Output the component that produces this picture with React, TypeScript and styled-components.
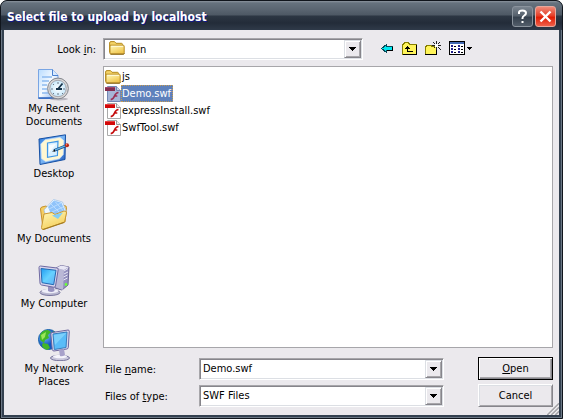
import React, { useState } from "react";
import styled, { createGlobalStyle, css } from "styled-components";

const face = "#ebe9ed";
const shadow = "#86858b";
const softEdge = "#a7a6aa";
const lightEdge = "#dcdfe4";

const GlobalStyle = createGlobalStyle`
  * { box-sizing: border-box; }
  body { margin: 0; background: #fff; color: #000; }
  body, button, input, select {
    font-family: "DejaVu Sans Condensed", "Liberation Sans", sans-serif;
    font-size: 11px;
    line-height: 13px;
  }
`;

const Frame = styled.div`
  display: flex;
  flex-direction: column;
  min-height: 100vh;
  padding: 0 3px 3px;
  border: 1px solid #10151c;
  border-radius: 7px 7px 0 0;
  background: #344150;
  box-shadow: inset 1px 0 #6b7785, inset -1px -1px #6b7785;
  overflow: hidden;
`;

const TitleBar = styled.header`
  display: flex;
  align-items: center;
  gap: 2px;
  height: 29px;
  margin: 0 -3px;
  padding: 2px 6px 0 6px;
  border-radius: 6px 6px 0 0;
  background: linear-gradient(#8b949e 0, #66727e 2px, #5b6672 8px, #4d5864 14px, #2c3643 15px, #232c39 22px, #2f3a49 29px);
`;

const Title = styled.h1`
  flex: 1;
  margin: 0;
  color: #fff;
  font-size: 12px;
  line-height: 16px;
  font-weight: bold;
  white-space: nowrap;
  text-shadow: 1px 1px #10188c;
`;

const CaptionButton = styled.button<{ $danger?: boolean }>`
  display: grid;
  place-items: center;
  width: 21px;
  height: 21px;
  padding: 0;
  border: 1px solid ${(p) => (p.$danger ? "#e8a79c" : "#8a939d")};
  border-radius: 3px;
  background: ${(p) =>
    p.$danger
      ? "linear-gradient(#ef8a78, #e5402a 45%, #e01d04 55%, #f0604a)"
      : "linear-gradient(#7a848f, #56616d 45%, #36414e 55%, #525d6a)"};
`;

const Body = styled.main`
  flex: 1;
  display: grid;
  grid-template-columns: 84px minmax(0, 1fr);
  grid-template-rows: auto 1fr;
  column-gap: 7px;
  row-gap: 6px;
  padding: 8px 6px 8px 8px;
  background: ${face};
`;

const LookLabel = styled.label`
  align-self: center;
  justify-self: end;
`;

const TopRow = styled.div`
  display: flex;
  align-items: center;
  gap: 17px;
`;

const Combo = styled.div`
  position: relative;
  display: flex;
  flex: 1;
  min-width: 0;
  height: 22px;
  padding: 1px;
  border: 1px solid;
  border-color: ${softEdge} #fff #fff ${softEdge};
  box-shadow: inset 1px 1px ${shadow}, inset -1px -1px ${lightEdge};
  background: #fff;
`;

const fieldStyle = css<{ $icon?: boolean }>`
  flex: 1;
  min-width: 0;
  padding: 0 20px 0 ${(p) => (p.$icon ? "26px" : "2px")};
  border: 0;
  outline: 0;
  appearance: none;
  background: transparent;
  color: #000;
`;

const Select = styled.select<{ $icon?: boolean }>`${fieldStyle}`;
const TextInput = styled.input<{ $icon?: boolean }>`${fieldStyle}`;

const ComboIcon = styled.span`
  position: absolute;
  left: 5px;
  top: 1px;
  height: 16px;
  pointer-events: none;
`;

const arrowStyle = css`
  position: absolute;
  top: 1px;
  right: 1px;
  bottom: 1px;
  display: grid;
  place-items: center;
  width: 17px;
  padding: 0;
  border: 1px solid;
  border-color: ${lightEdge} ${shadow} ${shadow} ${lightEdge};
  box-shadow: inset 1px 1px #fff, inset -1px -1px ${softEdge};
  background: ${face};
`;

const ArrowFace = styled.span`${arrowStyle} pointer-events: none;`;
const ArrowButton = styled.button`${arrowStyle}`;

const Toolbar = styled.div`
  display: flex;
  flex: none;
  gap: 8px;
  width: 173px;
`;

const ToolButton = styled.button`
  display: flex;
  padding: 0;
  border: 0;
  background: none;
`;

const Places = styled.nav`
  display: flex;
  flex-direction: column;
`;

const Place = styled.button`
  display: flex;
  flex-direction: column;
  align-items: center;
  height: 65px;
  padding: 3px 0 0;
  border: 0;
  background: none;
  color: #000;
  white-space: pre-line;
  svg { flex: none; margin-bottom: 1px; }
`;

const Main = styled.div`
  display: flex;
  flex-direction: column;
  gap: 9px;
`;

const FileList = styled.ul`
  flex: 1;
  margin: 0;
  padding: 1px;
  border: 1px solid ${softEdge};
  background: #fff;
  list-style: none;
`;

const FileName = styled.span<{ $selected: boolean }>`
  height: 17px;
  padding: 1px 1px 0 0;
  border: 1px dotted ${(p) => (p.$selected ? "#c99d50" : "transparent")};
  line-height: 13px;
  background: ${(p) => (p.$selected ? "#5e81bc" : "transparent")};
  color: ${(p) => (p.$selected ? "#fff" : "#000")};
`;

const FileButton = styled.button`
  display: flex;
  align-items: center;
  height: 17px;
  padding: 0;
  border: 0;
  background: none;
`;

const Footer = styled.form`
  display: grid;
  grid-template-columns: 96px minmax(0, 1fr) 75px;
  column-gap: 0;
  row-gap: 4px;
  align-items: center;
`;

const FieldLabel = styled.label`
  padding: 2px 0 0 2px;
`;

const ComboCell = styled.div`
  display: flex;
  padding-right: 34px;
`;

const PushButton = styled.button<{ $primary?: boolean }>`
  height: 23px;
  padding: 0;
  border: 1px solid;
  border-color: ${(p) => (p.$primary ? "#000" : `#fff ${shadow} ${shadow} #fff`)};
  box-shadow: ${(p) =>
    p.$primary
      ? `inset 1px 1px #fff, inset -1px -1px ${shadow}, inset -2px -2px ${softEdge}`
      : `inset 1px 1px ${lightEdge}, inset -1px -1px ${softEdge}`};
  background: ${face};
  color: #000;
`;

const Grip = styled.svg`
  position: absolute;
  right: 4px;
  bottom: 4px;
`;

const Window = styled.div`
  position: relative;
`;

const DownArrow = () => (
  <svg width="7" height="4" shapeRendering="crispEdges" aria-hidden="true">
    <path d="M0 0h7v1H0zM1 1h5v1H1zM2 2h3v1H2zM3 3h1v1H3z" />
  </svg>
);

const FolderIcon = () => (
  <svg width="16" height="16" viewBox="0 0 16 16" aria-hidden="true">
    <defs>
      <linearGradient id="folderFront" x1="0" y1="0" x2="0.6" y2="1">
        <stop stopColor="#fffbc0" />
        <stop offset="1" stopColor="#f0c54c" />
      </linearGradient>
    </defs>
    <path d="M.6 12.5V3Q.6 1.6 2 1.6h3.5L7 3.3h5.4q1 0 1 1V7" fill="#f3d368" stroke="#b48a20" />
    <path d="M1 13.8V5.2h13.2q1 0 1 1v6.6q0 1-1 1z" fill="url(#folderFront)" stroke="#b98c22" />
    <path d="M2.2 6.3h11.8" stroke="#fffce0" />
    <path d="M1.5 14.3h13.2l.8-1.2" fill="none" stroke="#8d6a18" />
  </svg>
);

const SwfIcon = ({ selected }: { selected: boolean }) => (
  <svg width="16" height="16" viewBox="0 0 16 16" aria-hidden="true">
    <path d="M2.5.5h9l4 4v11h-13z" fill={selected ? "#a6b6d8" : "#fff"} stroke={selected ? "#7488b4" : "#aaa"} />
    <path d="M11.5.5v4h4" fill={selected ? "#c7d1e6" : "#eee"} stroke={selected ? "#7488b4" : "#999"} />
    <path d="M0 1h10v4H0z" fill={selected ? "#852d50" : "#d20808"} />
    <path d="M0 1.5h10" stroke={selected ? "#a24668" : "#e84040"} />
    <path d="M13.5 6.5c-2.4.2-3.2 1.6-4 3.5-.8 2-1.6 3.4-3.8 3.7M9.3 10h3" fill="none" stroke={selected ? "#9c3057" : "#c40b0b"} strokeWidth="1.7" />
  </svg>
);

const BackIcon = () => (
  <svg width="14" height="16" viewBox="0 0 14 16" shapeRendering="crispEdges" aria-hidden="true">
    <path d="M1.5 7.5 6.5 3.5v2h6v4h-6v2z" fill="#00e8f0" stroke="#074a58" />
    <path d="M7 9.5h6M12.5 6v4" stroke="#000" />
  </svg>
);

const UpIcon = () => (
  <svg width="15" height="16" viewBox="0 0 15 16" shapeRendering="crispEdges" aria-hidden="true">
    <path d="M.5 13.5v-10h1v-1h1v-1h4v1h1v1h7v10z" fill="#fff45a" stroke="#877f00" />
    <path d="M1 13.5h13.5V4" fill="none" stroke="#000" />
    <path d="M5 5h1v1h1v1h1v1H6v2h5v1H5V8H3V7h1V6h1z" fill="#000" />
  </svg>
);

const NewFolderIcon = () => (
  <svg width="16" height="16" viewBox="0 0 16 16" shapeRendering="crispEdges" aria-hidden="true">
    <path d="M.5 13.5v-8h1v-1h5v1h5v8z" fill="#fff45a" stroke="#877f00" />
    <path d="M0 13.5h11.5V7" fill="none" stroke="#000" />
    <path d="M10 3h3v3h-3z" fill="#fff" />
    <path d="M11 0h1v3h-1zM11 6h1v3h-1zM7 4h3v1H7zM13 4h3v1h-3zM8 1h1v1H8zM9 2h1v1H9zM14 1h1v1h-1zM13 2h1v1h-1zM13 6h1v1h-1zM14 7h1v1h-1zM15 8h1v1h-1zM9 6h1v1H9z" fill="#222" />
  </svg>
);

const ViewIcon = () => (
  <svg width="23" height="16" viewBox="0 0 23 16" shapeRendering="crispEdges" aria-hidden="true">
    <path d="M.5.5h15v13H.5z" fill="#fff" stroke="#000" />
    <path d="M1 1h14v2H1z" fill="#4269b2" />
    {[4, 7, 10].map((y) =>
      [2, 9].map((x) => (
        <g key={`${x}-${y}`}>
          <path d={`M${x} ${y}h2v2h-2z`} fill="#20208c" />
          <path d={`M${x + 3} ${y + 1}h2v1h-2z`} fill="#000" />
        </g>
      )),
    )}
    <path d="M18 6h5v1h-5zM19 7h3v1h-3zM20 8h1v1h-1z" />
  </svg>
);

const RecentIcon = () => (
  <svg width="32" height="32" viewBox="0 0 32 32" aria-hidden="true">
    <defs>
      <linearGradient id="recentPage" x1="0" y1="0" x2="1" y2="1">
        <stop stopColor="#b8dcff" />
        <stop offset=".5" stopColor="#f5faff" />
        <stop offset="1" stopColor="#75a8ee" />
      </linearGradient>
      <radialGradient id="recentClock">
        <stop stopColor="#fff" />
        <stop offset="1" stopColor="#c5e7fa" />
      </radialGradient>
    </defs>
    <path d="M.5.5h14l5.5 6v23H.5z" fill="url(#recentPage)" stroke="#79a5e4" />
    <path d="M.5 29h19" stroke="#2861bb" strokeWidth="1.5" />
    <path d="M14.5.5v6H20" fill="#d8eaff" stroke="#4b82d1" />
    <path d="M4 8h10M4 12h7M4 16h5M4 20h5M4 24h7" stroke="#8dbbf0" strokeWidth="1.5" />
    <ellipse cx="21" cy="30" rx="9" ry="1.5" fill="#858391" opacity=".5" />
    <circle cx="20" cy="19.5" r="10.4" fill="#d9d8d8" stroke="#82858c" />
    <circle cx="20" cy="19.5" r="8.2" fill="url(#recentClock)" stroke="#a6a6ad" />
    <path d="M20 13v2M20 24v2M13 20h2M25 20h2M15 15l1 1M15 25l1-1M25 25l-1-1" stroke="#6b7887" />
    <path d="m20 20 4.5-5.5M18 20h6" fill="none" stroke="#18364d" strokeWidth="1.8" />
  </svg>
);

const DesktopIcon = () => (
  <svg width="32" height="32" viewBox="0 0 32 32" aria-hidden="true">
    <defs>
      <linearGradient id="deskPad" x1="0" y1="0" x2="1" y2="1">
        <stop stopColor="#2d78dc" />
        <stop offset=".5" stopColor="#79b5f5" />
        <stop offset="1" stopColor="#1c56b9" />
      </linearGradient>
    </defs>
    <path d="M1 5 27.5.8 27 25.5 2 30.5z" fill="url(#deskPad)" stroke="#1650a4" strokeLinejoin="round" />
    <path d="m7 5.8 15-2.4 3.8 3.2-.6 14-3.7 4.2-14 2.8-4-3.2L2.8 10z" fill="#fff7d2" stroke="#cfe4fa" strokeWidth=".7" />
    <path d="m9.5 9 10.5-1.7-.6 14.2-9.9 1.8z" fill="#d9f0ff" stroke="#3f96e6" strokeWidth="1.2" />
    <path d="m11 11 7-1-7 9z" fill="#fff" opacity=".8" />
    <path d="m16 16.5 12-4.8" stroke="#1c4472" strokeWidth="2.8" />
    <path d="m17 16 11-4.4" stroke="#5eb0e7" strokeWidth="1.4" />
    <circle cx="29" cy="11.2" r="2" fill="#bd2712" />
    <circle cx="28.5" cy="10.7" r=".7" fill="#ff8c70" />
    <path d="m14 17.5 3-2v2z" fill="#111" />
  </svg>
);

const DocumentsIcon = () => (
  <svg width="32" height="32" viewBox="0 0 32 32" aria-hidden="true">
    <defs>
      <linearGradient id="docsFront" x1="0" y1="0" x2=".5" y2="1">
        <stop stopColor="#fff9bd" />
        <stop offset="1" stopColor="#f5cf5a" />
      </linearGradient>
    </defs>
    <path d="M2.5 10q0-1.5 1.5-2l4-1 2 1.5 16-2q2.5 0 2.5 2L27 23 5 29z" fill="#f5ce63" stroke="#c6922d" />
    <path d="m6 11 9.5-10.5 9 2.5 3.5 9-8 9H9z" fill="#eef8ff" stroke="#a3c4e8" strokeWidth=".8" />
    <path d="m10 8 6-6.5 7.5 2.3L26.5 11l-5 5-9-2z" fill="#8fc3fa" />
    <path d="m13 5 9 9M17 2.5l8 9M11 10l12-6M14 13l11-5" stroke="#b9dcff" />
    <path d="m6 15 8-1.5 3 2 9-3.5q3-.3 2.5 2L26.5 23 5.5 30.5q-2 .4-2-2z" fill="url(#docsFront)" stroke="#c99732" />
    <path d="m14 16.5 11-3-5 6.5z" fill="#82cdf5" />
    <path d="m5 30.5 21-7" stroke="#a17b22" strokeWidth="1.2" />
  </svg>
);

const Monitor = () => (
  <>
    <ellipse cx="12" cy="28.5" rx="10" ry="3" fill="#b9b8d0" stroke="#77759e" />
    <ellipse cx="12" cy="27" rx="8.5" ry="2.2" fill="#eeeef8" />
    <path d="m10 21 6 1 .5 5q-3 2-6.5 0z" fill="#9691bf" />
    <path d="M1 3.5Q1 2 2.5 2L19 4q1.5 0 1.2 1.7L17.5 22q-.3 1.5-2 1.2L3.5 21Q2 20.5 2 19z" fill="#d7d4ec" stroke="#6e69a2" />
    <path d="m3 4.5 15 1.8-2.3 14.4L4 18.7z" fill="url(#screenGlow)" stroke="#2469b2" />
  </>
);

const ScreenGradient = () => (
  <linearGradient id="screenGlow" x1="0" y1="0" x2="1" y2="1">
    <stop stopColor="#1e9bf0" />
    <stop offset=".5" stopColor="#66d2ff" />
    <stop offset="1" stopColor="#62adf4" />
  </linearGradient>
);

const ComputerIcon = () => (
  <svg width="32" height="32" viewBox="0 0 32 32" aria-hidden="true">
    <defs><ScreenGradient /></defs>
    <path d="m18 4 5-2.5L31 3l-1 18-6 5-7-2z" fill="#9390bf" stroke="#6c6797" />
    <path d="m18 4 8 2-1 20-8-3z" fill="#bab8d6" />
    <path d="m18 4 5-2.5L31 3l-5 3z" fill="#e8e7f5" />
    <path d="m26 7 4-2.5M26 10l4-2M25.5 13l4-2M25.5 16l4-2" stroke="#e9e8f5" />
    <circle cx="28" cy="20.5" r="1.4" fill="#6cff35" />
    <Monitor />
  </svg>
);

const NetworkIcon = () => (
  <svg width="32" height="32" viewBox="0 0 32 32" aria-hidden="true">
    <defs>
      <radialGradient id="globeSea" cx=".3" cy=".3">
        <stop stopColor="#81c9ff" />
        <stop offset="1" stopColor="#1458c1" />
      </radialGradient>
    </defs>
    <circle cx="10.5" cy="10.5" r="10" fill="url(#globeSea)" stroke="#1762aa" />
    <path d="M2 6q2-5 8-5l3 2-3 3 1 3-4 2-1 3-4-3zM5 14l5 1 2 4-3 2q-5-2-5-5zM15 2q3 2 4 5l-5-1z" fill="#42b629" />
    <path d="m3 6 5-3-1 5-3 3z" fill="#9be75a" />
    <g transform="translate(11 1)">
      <path d="M3 2.5 19 0q1.4 0 1.3 1.4l-1 16q-.1 1.4-1.5 1.6L5 21q-1.5 0-1.7-1.4L1.8 4Q1.7 2.7 3 2.5z" fill="#d8d6eb" stroke="#6d67a0" />
      <path d="m4 4 14-2-1 15.5-11.7 2z" fill="#59bcf8" stroke="#367cbd" />
      <path d="m4.8 5 12.5-2L6 15z" fill="#93deff" opacity=".6" />
      <ellipse cx="11" cy="28" rx="9.5" ry="2.7" fill="#c9c7dc" stroke="#77759e" />
      <ellipse cx="11" cy="26.5" rx="7" ry="1.8" fill="#f5f4fb" />
      <path d="m10 20 5-1 1 6q-3 2-5 1z" fill="#a7a1ca" />
    </g>
  </svg>
);

const places = [
  { label: "My Recent\nDocuments", Icon: RecentIcon },
  { label: "Desktop", Icon: DesktopIcon },
  { label: "My Documents", Icon: DocumentsIcon },
  { label: "My Computer", Icon: ComputerIcon },
  { label: "My Network\nPlaces", Icon: NetworkIcon },
];

const files = ["js", "Demo.swf", "expressInstall.swf", "SwfTool.swf"];

export default function App() {
  const [selected, setSelected] = useState("Demo.swf");
  return (
    <Window>
      <GlobalStyle />
      <Frame>
        <TitleBar>
          <Title>Select file to upload by localhost</Title>
          <CaptionButton aria-label="Help">
            <svg width="11" height="15" viewBox="0 0 11 15" aria-hidden="true">
              <path d="M2 5V3.5Q2 1.5 5.5 1.5T9 4q0 1.5-1.7 2.5T5.5 9v1" fill="none" stroke="#fff" strokeWidth="2" />
              <path d="M4.5 12h2v2h-2z" fill="#fff" />
            </svg>
          </CaptionButton>
          <CaptionButton $danger aria-label="Close">
            <svg width="13" height="13" viewBox="0 0 13 13" aria-hidden="true">
              <path d="m1.5 1.5 10 10M11.5 1.5l-10 10" stroke="#fff" strokeWidth="2.4" />
            </svg>
          </CaptionButton>
        </TitleBar>
        <Body>
          <LookLabel htmlFor="folder">Look <u>i</u>n:</LookLabel>
          <TopRow>
            <Combo>
              <ComboIcon><FolderIcon /></ComboIcon>
              <Select id="folder" $icon defaultValue="bin"><option>bin</option></Select>
              <ArrowFace><DownArrow /></ArrowFace>
            </Combo>
            <Toolbar>
              <ToolButton aria-label="Back"><BackIcon /></ToolButton>
              <ToolButton aria-label="Up one level"><UpIcon /></ToolButton>
              <ToolButton aria-label="Create new folder"><NewFolderIcon /></ToolButton>
              <ToolButton aria-label="View menu"><ViewIcon /></ToolButton>
            </Toolbar>
          </TopRow>
          <Places>
            {places.map(({ label, Icon }) => (
              <Place key={label}><Icon />{label}</Place>
            ))}
          </Places>
          <Main>
            <FileList>
              {files.map((name) => (
                <li key={name}>
                  <FileButton aria-pressed={name === selected} onClick={() => setSelected(name)}>
                    {name === "js" ? <FolderIcon /> : <SwfIcon selected={name === selected} />}
                    <FileName $selected={name === selected}>{name}</FileName>
                  </FileButton>
                </li>
              ))}
            </FileList>
            <Footer onSubmit={(e) => e.preventDefault()}>
              <FieldLabel htmlFor="name">File <u>n</u>ame:</FieldLabel>
              <ComboCell>
                <Combo>
                  <TextInput id="name" value={selected} onChange={(e) => setSelected(e.target.value)} />
                  <ArrowButton type="button" aria-label="Recent names"><DownArrow /></ArrowButton>
                </Combo>
              </ComboCell>
              <PushButton $primary type="submit"><u>O</u>pen</PushButton>
              <FieldLabel htmlFor="type">Files of <u>t</u>ype:</FieldLabel>
              <ComboCell>
                <Combo>
                  <Select id="type"><option>SWF Files</option></Select>
                  <ArrowFace><DownArrow /></ArrowFace>
                </Combo>
              </ComboCell>
              <PushButton type="button">Cancel</PushButton>
            </Footer>
          </Main>
        </Body>
      </Frame>
      <Grip width="12" height="12" viewBox="0 0 12 12" aria-hidden="true">
        <path d="M0 12 12 0M4 12l8-8M8 12l4-4" stroke="#a7a6aa" strokeWidth="2" />
        <path d="M-1.5 12 12-1.5M2.5 12 12 2.5M6.5 12 12 6.5" stroke="#fff" />
      </Grip>
    </Window>
  );
}
